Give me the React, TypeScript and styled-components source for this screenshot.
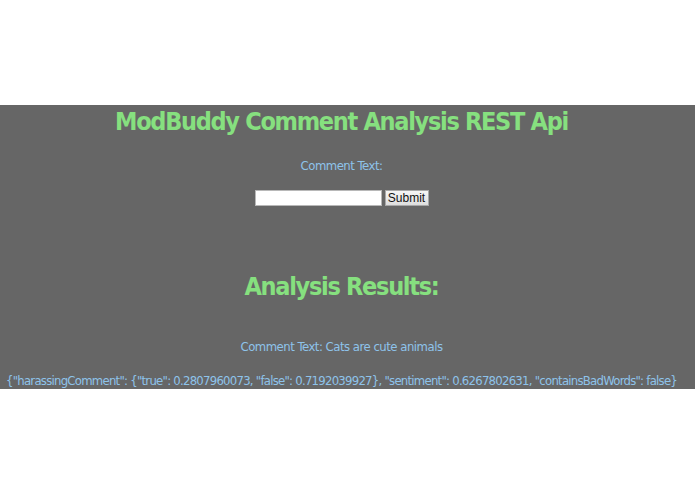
import React from 'react';
import styled, { createGlobalStyle } from 'styled-components';

const GlobalStyle = createGlobalStyle`
  body {
    margin: 0;
    background-color: #ffffff;
  }
`;

const SPanel = styled.main`
  margin-top: 105px;
  height: 284px;
  padding-right: 12px;
  background-color: #666666;
  text-align: center;
  overflow: hidden;
`;

const STitle = styled.h1<{ $top: number }>`
  margin: ${(props) => props.$top}px 0 0;
  font-family: 'DejaVu Sans Condensed', 'DejaVu Sans', sans-serif;
  font-weight: bold;
  font-size: 25px;
  line-height: 30px;
  letter-spacing: -1.3px;
  color: #86e07f;
`;

const SText = styled.p<{ $top: number; $tight?: boolean }>`
  margin: ${(props) => props.$top}px 0 0;
  font-family: 'DejaVu Sans Condensed', 'DejaVu Sans', sans-serif;
  font-size: 13px;
  line-height: 16px;
  letter-spacing: ${(props) => (props.$tight ? '-0.75px' : '-0.5px')};
  color: #8ec3ea;
  white-space: nowrap;
`;

const SForm = styled.form`
  display: flex;
  justify-content: center;
  gap: 3px;
  margin-top: 16px;
`;

const SInput = styled.input`
  box-sizing: border-box;
  width: 127px;
  height: 16px;
  margin: 0;
  padding: 0 2px;
  border: 1px solid #b8b8b8;
  background: #ffffff;
`;

const SButton = styled.button`
  box-sizing: border-box;
  width: 44px;
  height: 16px;
  padding: 0;
  margin: 0;
  border: 1px solid #a8a8a8;
  background: linear-gradient(#f6f6f6, #dedede);
  font-family: 'Liberation Sans', Arial, sans-serif;
  font-size: 12px;
  line-height: 14px;
  color: #111111;
`;

const App = () => {
  return (
    <>
      <GlobalStyle />
      <SPanel>
        <STitle $top={2}>ModBuddy Comment Analysis REST Api</STitle>
        <SText $top={21}>Comment Text:</SText>
        <SForm onSubmit={(e) => e.preventDefault()}>
          <SInput type="text" />
          <SButton type="submit">Submit</SButton>
        </SForm>
        <STitle $top={66}>Analysis Results:</STitle>
        <SText $top={37}>Comment Text: Cats are cute animals</SText>
        <SText $top={18} $tight>
          {'{"harassingComment": {"true": 0.2807960073, "false": 0.7192039927}, "sentiment": 0.6267802631, "containsBadWords": false}'}
        </SText>
      </SPanel>
    </>
  );
};

export default App;
